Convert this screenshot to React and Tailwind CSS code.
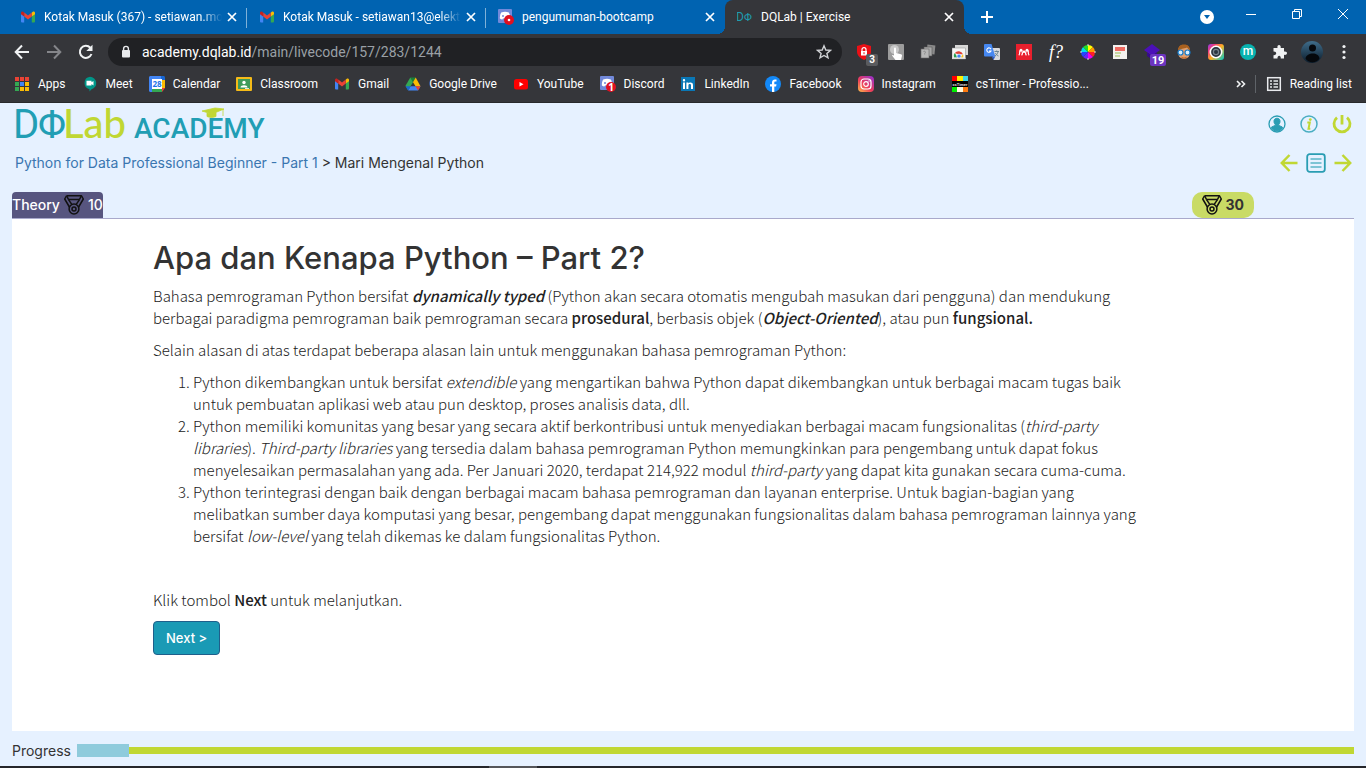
import React from "react";

const Svg = ({ size = 16, box = "0 0 16 16", className = "", children }) => (
  <svg width={size} height={size} viewBox={box} className={"shrink-0 " + className} fill="none" aria-hidden="true">
    {children}
  </svg>
);

/* ---------- brand icons ---------- */
const GmailIcon = () => (
  <Svg>
    <path d="M1 4.2V12.6a1 1 0 0 0 1 1h2.2V7.4z" fill="#4285f4" />
    <path d="M15 4.2V12.6a1 1 0 0 1-1 1h-2.2V7.4z" fill="#34a853" />
    <path d="M11.8 3.6v4L15 5.2V4c0-1.3-1.4-1.9-2.4-1.1z" fill="#fbbc04" />
    <path d="M4.2 7.6v-4L8 6.4l3.8-2.8v4L8 10.5z" fill="#ea4335" />
    <path d="M1 4v1.2l3.2 2.4v-4l-.8-.7C2.4 2.1 1 2.700 1 4z" fill="#c5221f" />
  </Svg>
);
const DiscordIcon = ({ count }) => (
  <Svg>
    <rect width="14" height="14" x="0" y="0" rx="1" fill="#7289da" />
    <path d="M3.200 3.600c2.600-1.200 5.200-1.200 7.600 0 1 1.800 1.500 3.700 1.300 5.800-.9.700-1.700 1-2.500 1.100l-.6-1H5l-.6 1c-.8-.1-1.600-.4-2.500-1.100-.2-2.100.3-4 1.300-5.800z" fill="#fff" />
    <circle cx="5" cy="7" r="1" fill="#7289da" />
    <circle cx="11" cy="11" r="5" fill="#e01020" />
    {count ? (
      <text x="11" y="14.500" fontSize="10" fontWeight="700" fontFamily="Open Sans, sans-serif" textAnchor="middle" fill="#fff">{count}</text>
    ) : (
      <circle cx="11" cy="11" r="1.300" fill="#fff" />
    )}
  </Svg>
);
const DqIcon = () => (
  <Svg>
    <text x="-1" y="12" fontSize="12" fontFamily="Roboto, sans-serif" fill="#1f9bb0">D</text>
    <text x="7" y="12" fontSize="11" fontFamily="Roboto, sans-serif" fill="#1f9bb0">Φ</text>
  </Svg>
);
const AppsIcon = () => (
  <Svg>
    {["#ea4335", "#ea4335", "#ea4335", "#34a853", "#4285f4", "#fbbc04", "#34a853", "#fbbc04", "#fbbc04"].map((c, i) => (
      <rect key={i} x={1 + (i % 3) * 5} y={1 + Math.floor(i / 3) * 5} width="4" height="4" fill={c} />
    ))}
  </Svg>
);
const MeetIcon = () => (
  <Svg>
    <path d="M8 .8a6.300 6.300 0 0 1 1.500 12.400L7.500 15.400v-2.200A6.300 6.300 0 0 1 8 .8z" fill="#009688" />
    <path d="M4.500 4.800h5v1.500l2-1.400v4.600l-2-1.400v1.400h-5z" fill="#fff" />
  </Svg>
);
const CalendarIcon = () => (
  <Svg>
    <path d="M0 1.500C0 .7.700 0 1.500 0H12v3H3v13H1.500C.7 16 0 15.300 0 14.500z" fill="#4285f4" />
    <path d="M12 0h2.500c.8 0 1.500.7 1.500 1.500V4h-4z" fill="#1967d2" />
    <path d="M13 4h3v8h-3z" fill="#fbbc04" />
    <path d="M3 13h10v3H3z" fill="#34a853" />
    <path d="M13 16v-4h3z" fill="#ea4335" />
    <path d="M3 3h10v10H3z" fill="#fff" />
    <text x="8" y="11" fontSize="8" fontWeight="700" fontFamily="Open Sans, sans-serif" textAnchor="middle" fill="#1a73e8">28</text>
  </Svg>
);
const ClassroomIcon = () => (
  <Svg>
    <rect y="1" width="16" height="14" rx="1" fill="#f6bb18" />
    <rect x="2" y="3" width="12" height="10" fill="#3e9b5b" />
    <circle cx="8" cy="6.500" r="1.700" fill="#fff" />
    <path d="M4.500 11.500c0-3 7-3 7 0z" fill="#fff" />
    <path d="M9 12h4v1H9z" fill="#dfe8df" />
  </Svg>
);
const DriveIcon = () => (
  <Svg>
    <path d="M5.300 1.500h5.400L8 6.200z" fill="#188038" />
    <path d="M5.300 1.500L0.500 9.800l2.600 4.400L8 6.200z" fill="#34a853" />
    <path d="M10.700 1.500L8 6.200l2.500 4H15.500z" fill="#fbbc04" />
    <path d="M5.600 10.200H15.500L13 14.500H3.100z" fill="#4285f4" />
    <path d="M10.500 10.200h5L13 14.500z" fill="#ea4335" />
    <path d="M.5 10.200h5L3.100 14.500z" fill="#1967d2" />
  </Svg>
);
const YoutubeIcon = () => (
  <Svg>
    <rect x="1" y="3" width="14" height="10.500" rx="2.500" fill="#f00" />
    <path d="M6.500 6v4.500l4-2.250z" fill="#fff" />
  </Svg>
);
const LinkedinIcon = () => (
  <Svg>
    <rect x="1" y="1" width="14" height="14" fill="#0a77b5" />
    <path d="M3 6.500h2V13H3zM4 3a1.200 1.200 0 1 1 0 2.400A1.200 1.200 0 0 1 4 3zM6.400 6.500h2v.9c.9-1.500 4.600-1.600 4.600 1.500V13h-2V9.500c0-2-2.600-1.800-2.600 0V13h-2z" fill="#fff" />
  </Svg>
);
const FacebookIcon = () => (
  <Svg>
    <circle cx="8" cy="8" r="8" fill="#1389f8" />
    <path d="M7 16v-5.500H5V8.200h2V6.500c0-2 1.200-3.100 3-3.100.8 0 1.500.1 1.500.1v2h-1c-1 0-1.200.6-1.200 1.200v1.500h2.200l-.4 2.300H9.300V16z" fill="#fff" />
  </Svg>
);
const InstagramIcon = () => (
  <Svg>
    <defs>
      <linearGradient id="insta" x1="0" y1="16" x2="14" y2="0" gradientUnits="userSpaceOnUse">
        <stop offset="0" stopColor="#fdc04b" /><stop offset=".45" stopColor="#ee3e58" /><stop offset="1" stopColor="#9b30c8" />
      </linearGradient>
    </defs>
    <rect width="16" height="16" rx="4" fill="url(#insta)" />
    <rect x="3" y="3" width="10" height="10" rx="3" stroke="#fff" strokeWidth="1.200" />
    <circle cx="8" cy="8" r="2.300" stroke="#fff" strokeWidth="1.200" />
    <circle cx="11" cy="5" r=".7" fill="#fff" />
  </Svg>
);
const CsTimerIcon = () => (
  <Svg>
    <path d="M0 0h5v6H0z" fill="#f00" /><path d="M5 0h6v6H5z" fill="#fe0" /><path d="M11 0h5v6h-5z" fill="#3bd5e8" />
    <path d="M0 5h16v6H0z" fill="#000" />
    <text x="8" y="9.500" fontSize="4" fontWeight="700" fontFamily="Roboto, sans-serif" textAnchor="middle" fill="#ddd">csTimer</text>
    <path d="M0 11h5v5H0z" fill="#0e0" /><path d="M5 11h6v5H5z" fill="#fffbe0" /><path d="M11 11h5v5h-5z" fill="#ff7a10" />
  </Svg>
);

/* ---------- toolbar icons ---------- */
const BackIcon = () => <Svg><path d="M15 8H2M8 1.500L1.700 8 8 14.500" stroke="currentColor" strokeWidth="2" /></Svg>;
const ForwardIcon = () => <Svg><path d="M1 8h13M8 1.500L14.300 8 8 14.500" stroke="currentColor" strokeWidth="2" /></Svg>;
const ReloadIcon = () => (
  <Svg>
    <path d="M13.500 10A6 6 0 1 1 12.300 3.800" stroke="currentColor" strokeWidth="2" />
    <path d="M14.500.800V7H8.300z" fill="currentColor" />
  </Svg>
);
const LockIcon = () => (
  <Svg>
    <rect x="4" y="6" width="8" height="7.500" rx="1" fill="#e8eaed" />
    <path d="M5.600 7V4.800a2.400 2.400 0 0 1 4.800 0V7" stroke="#e8eaed" strokeWidth="1.400" />
  </Svg>
);
const StarIcon = () => <Svg><path d="M8 1.800l1.800 4.200 4.600.4-3.500 3 1.100 4.500L8 11.500l-4 2.400 1.100-4.500-3.500-3L6.200 6z" stroke="#d0d2d5" strokeWidth="1.400" /></Svg>;
const CloseIcon = () => <Svg><path d="M4 4l8 8M12 4l-8 8" stroke="#fff" strokeWidth="1.700" /></Svg>;

const ShieldExt = () => (
  <span className="relative block">
    <Svg>
      <path d="M8 0l7 2v5.500c0 4-3 6.800-7 8.500-4-1.700-7-4.500-7-8.500V2z" fill="#ea1016" />
      <rect x="5" y="7" width="6" height="4.500" fill="#fff" />
      <path d="M6 7.500V5.600a2 2 0 0 1 4 0v1.900" stroke="#fff" strokeWidth="1.200" />
      <path d="M8 8.200v2" stroke="#ea1016" />
    </Svg>
    <span className="absolute left-2.5 top-2.5 flex h-3 w-3 items-center justify-center rounded-xs bg-[#5a5b5e] text-[10px] font-bold leading-none text-white">3</span>
  </span>
);
const TouchExt = () => (
  <Svg>
    <rect width="16" height="16" rx="1" fill="#9c9c9c" />
    <circle cx="6.500" cy="5.500" r="4.500" fill="#c9c9c9" />
    <path d="M6 4.500a1 1 0 0 1 2 0V9l5 1.300c.8.2 1 .8 1 1.500L13 16H7.500L4 11.500c1-1 1.500-.4 2 .3z" fill="#fff" />
  </Svg>
);
const CopyExt = () => (
  <Svg>
    <rect x="7" y="1" width="8" height="9" fill="#8a8a8a" transform="rotate(6 11 5)" />
    <rect x="4" y="3" width="8" height="9" fill="#a8a8a8" stroke="#555" strokeWidth=".6" />
    <rect x="1" y="5" width="8" height="9" fill="#b8b8b8" stroke="#666" strokeWidth=".6" />
    <path d="M3.500 7.500c2-1 2.500 1 1.200 2v1" stroke="#888" />
  </Svg>
);
const StoreExt = () => (
  <Svg>
    <rect x="3" y="1" width="13" height="10" fill="#d7d7d7" />
    <rect x="0" y="4" width="13.500" height="11" fill="#f5f5f5" stroke="#8a8a8a" strokeWidth=".5" />
    <path d="M2 13.500a4.700 4.700 0 0 1 .7-4.500l3 4.500z" fill="#2aa050" />
    <path d="M2.700 9.200a4.800 4.800 0 0 1 8.300 1H7z" fill="#e34133" />
    <path d="M11 10.200c.6 1.400.4 2.300.2 3.300H8z" fill="#fbc116" />
    <circle cx="7" cy="12.200" r="2.100" fill="#4285f4" stroke="#fff" strokeWidth=".7" />
    <rect y="13.700" width="13.500" height="1.300" fill="#ddd" />
  </Svg>
);
const TranslateExt = () => (
  <Svg>
    <path d="M7 4h8a1 1 0 0 1 1 1v10a1 1 0 0 1-1 1H9.500z" fill="#d8dadd" />
    <path d="M0 1a1 1 0 0 1 1-1h6.500l3.800 12.500H1a1 1 0 0 1-1-1z" fill="#4688f1" />
    <path d="M7.500 12.500h3.800L9.500 16z" fill="#2f5fc4" />
    <path d="M7 5.200A2.200 2.200 0 1 0 7 7H5" stroke="#fff" strokeWidth="1.100" />
    <path d="M10.500 7.500h4.500M12.700 6.500v1M14 8c-.5 2-1.500 3-3 4M11.500 9c.5 1.500 1.500 2.500 3 3" stroke="#607d8b" strokeWidth=".9" />
  </Svg>
);
const MendeleyExt = () => (
  <Svg>
    <rect width="16" height="16" fill="#e9202d" />
    <circle cx="5" cy="6.200" r="1.500" fill="#fff" />
    <circle cx="11" cy="6.200" r="1.500" fill="#fff" />
    <circle cx="8" cy="7.800" r="1.300" fill="#fff" />
    <path d="M2.800 11.200c1.100-.9 1-2.500 1-4.500M13.200 11.200c-1.100-.9-1-2.500-1-4.500M6.200 7.500c.4 1.300.2 2.800-.6 3.800M9.800 7.500c-.4 1.300-.2 2.800.6 3.800" stroke="#fff" strokeWidth="1.200" />
  </Svg>
);
const FontExt = () => <span className="font-['Liberation_Serif',serif] text-lg italic leading-none text-white">f?</span>;
const WheelExt = () => (
  <Svg>
    {["#ff0", "#f90", "#f22", "#e0e", "#62f", "#24f", "#0de", "#2d2"].map((c, i) => (
      <path key={c} d="M8 8L8 1A7 7 0 0 1 12.950 3.050z" fill={c} transform={"rotate(" + i * 45 + " 8 8)"} />
    ))}
    <path d="M8 0v2M8 14v2M0 8h2M14 8h2" stroke="#ddd" />
  </Svg>
);
const NoteExt = () => (
  <Svg>
    <rect x="1" y="1" width="14" height="14" fill="#f3f1ee" />
    <rect x="3" y="3" width="10" height="4" fill="#ee6a62" />
    <path d="M3 9h6M3 12h5" stroke="#9bbd55" strokeWidth="1.200" />
  </Svg>
);
const LayerExt = () => (
  <span className="relative block">
    <Svg><path d="M8 0l8 6-8 6-8-6z" fill="#4b10b8" /><path d="M3 8.500V12l5 3.500 5-3.500V8.500L8 12z" fill="#370b8c" /></Svg>
    <span className="absolute left-1.5 top-2.5 flex h-3 w-4 items-center justify-center rounded-xs bg-[#6b34c0] text-[11px] font-bold leading-none text-white">19</span>
  </span>
);
const FaceExt = () => (
  <Svg>
    <path d="M2.500 7C2 2 5 1 8 1s6 1 5.500 6v4c-1 5-10 5-11 0z" fill="#e0a070" />
    <path d="M2 7c0-4 1.500-6.500 6-6.500S14 3 14 7l-3-3.500C8 5 4.500 4 2 7z" fill="#a8601e" />
    <circle cx="4.500" cy="8.500" r="2.500" fill="#d8eefc" stroke="#1379c9" strokeWidth="1.200" />
    <circle cx="11.500" cy="8.500" r="2.500" fill="#d8eefc" stroke="#1379c9" strokeWidth="1.200" />
    <path d="M5.500 12.500c1.500 1.300 3.500 1.300 5 0v2h-5z" fill="#c46a2a" />
  </Svg>
);
const CameraExt = () => (
  <Svg>
    <defs>
      <linearGradient id="cam" x1="0" y1="0" x2="16" y2="14" gradientUnits="userSpaceOnUse">
        <stop offset="0" stopColor="#8a3df0" /><stop offset=".25" stopColor="#f03c7c" /><stop offset=".55" stopColor="#ffb020" /><stop offset="1" stopColor="#18c8b8" />
      </linearGradient>
    </defs>
    <rect width="16" height="16" rx="3" fill="url(#cam)" />
    <circle cx="8" cy="8" r="5.700" fill="#2b3540" stroke="#fff" strokeWidth="1.600" />
    <circle cx="8" cy="8" r="2.600" stroke="#77828c" strokeWidth="1.200" />
  </Svg>
);
const MExt = () => <span className="flex h-4 w-4 items-center justify-center rounded-full bg-[#08b3b0] pb-0.5 text-[12px] font-medium leading-none text-white">m</span>;
const PuzzleExt = () => (
  <Svg>
    <path d="M1.500 4h4c-1-4 4-4 3.200 0H12v3.600c4-1 4 4 0 3.200V14.500H8.700c.6-3.600-3.500-3.600-3.200 0h-4v-3.300c3.600.4 3.600-4 0-3.600z" fill="#f1f3f4" />
  </Svg>
);
const AvatarIcon = () => (
  <Svg size={22} box="0 0 22 22">
    <defs><linearGradient id="av" x1="0" y1="0" x2="0" y2="22" gradientUnits="userSpaceOnUse"><stop stopColor="#3f6d8b" /><stop offset="1" stopColor="#0c1c2b" /></linearGradient></defs>
    <circle cx="11" cy="11" r="11" fill="url(#av)" />
    <circle cx="11.500" cy="7" r="3.500" fill="#05080c" />
    <path d="M4.500 17.500c1-6 13-7 14 0-3 5-11 5-14 0z" fill="#05080c" />
  </Svg>
);
const DotsIcon = () => <Svg><circle cx="8" cy="2.500" r="1.600" fill="#f1f3f4" /><circle cx="8" cy="8" r="1.600" fill="#f1f3f4" /><circle cx="8" cy="13.500" r="1.600" fill="#f1f3f4" /></Svg>;

const MedalIcon = () => (
  <Svg size={20} box="0 0 20 20">
    <g stroke="#111" strokeWidth="1.500" strokeLinejoin="round">
      <path d="M2.500.8h15L19.300 4l-5 8.500M2.500.8L.7 4l5 8.500M4.500 4.600h11" />
      <path d="M4.500 4.600l3.300 4.800M15.500 4.600l-3.300 4.800M2.800 1l1.700 3.500M17.200 1l-1.700 3.500" />
      <circle cx="10" cy="14" r="4.900" />
      <circle cx="10" cy="14" r="2" />
    </g>
  </Svg>
);

/* ---------- browser chrome ---------- */
const tabs = [
  { title: "Kotak Masuk (367) - setiawan.mo", icon: <GmailIcon />, fade: true, sep: true },
  { title: "Kotak Masuk - setiawan13@elekt", icon: <GmailIcon />, fade: true, sep: true },
  { title: "pengumuman-bootcamp", icon: <DiscordIcon /> },
  { title: "DQLab | Exercise", icon: <DqIcon />, active: true },
];

const Tab = ({ title, icon, fade, sep, active }) => (
  <div role="tab" aria-selected={!!active} className={"relative flex w-[239px] items-center gap-2 pl-3 pr-[7px] " + (active ? "rounded-t-lg bg-[#35363a]" : "")}>
    {icon}
    <span className={"-mr-1.5 flex-1 overflow-hidden whitespace-nowrap " + (fade ? "[mask-image:linear-gradient(to_right,#000_88%,transparent)]" : "")}>{title}</span>
    <button aria-label={"Close " + title} className="shrink-0"><CloseIcon /></button>
    {sep && <span className="absolute right-0 top-2 h-5 w-px bg-[#7fb1d8]" />}
    {active && <span className="absolute -left-2 bottom-0 size-2 bg-[radial-gradient(circle_at_0_0,#0063b1_8px,#35363a_8px)]" />}
    {active && <span className="absolute -right-2 bottom-0 size-2 bg-[radial-gradient(circle_at_100%_0,#0063b1_8px,#35363a_8px)]" />}
  </div>
);

const extensions = [
  ["Ad blocker", ShieldExt], ["Touch", TouchExt], ["Copy", CopyExt], ["Web store", StoreExt], ["Translate", TranslateExt],
  ["Mendeley", MendeleyExt], ["WhatFont", FontExt], ["Colour wheel", WheelExt], ["Notes", NoteExt], ["Layers", LayerExt],
  ["Face", FaceExt], ["Camera", CameraExt], ["Mote", MExt], ["Extensions", PuzzleExt], ["Profile", AvatarIcon], ["Menu", DotsIcon],
];

const bookmarks = [
  ["Apps", AppsIcon], ["Meet", MeetIcon], ["Calendar", CalendarIcon], ["Classroom", ClassroomIcon], ["Gmail", GmailIcon],
  ["Google Drive", DriveIcon], ["YouTube", YoutubeIcon], ["Discord", () => <DiscordIcon count="1" />], ["LinkedIn", LinkedinIcon],
  ["Facebook", FacebookIcon], ["Instagram", InstagramIcon], ["csTimer - Professio...", CsTimerIcon],
];

const Browser = () => (
  <div className="bg-[#35363a] font-['Roboto',sans-serif] text-[12px] text-white">
    <div className="flex h-[34px] bg-[#0063b1] pl-2">
      <div role="tablist" className="flex">{tabs.map((t) => <Tab key={t.title} {...t} />)}</div>
      <button aria-label="New tab" className="ml-[15px] self-center">
        <Svg><path d="M8 2v12M2 8h12" stroke="#fff" strokeWidth="2" /></Svg>
      </button>
      <div className="ml-auto flex items-start">
        <button aria-label="Search tabs" className="mr-[13px] self-center">
          <Svg><circle cx="8" cy="8" r="7" fill="#fff" /><path d="M5 6h6l-3 4z" fill="#0063b1" /></Svg>
        </button>
        <button aria-label="Minimize" className="flex h-7 w-[46px] items-center justify-center"><Svg><path d="M3 8.500h10" stroke="#fff" /></Svg></button>
        <button aria-label="Restore" className="flex h-7 w-[46px] items-center justify-center"><Svg><path d="M3.500 5.500h7v7h-7zM5.500 5.500v-2h7v7h-2" stroke="#fff" /></Svg></button>
        <button aria-label="Close window" className="flex h-7 w-[46px] items-center justify-center"><Svg><path d="M3 3l10 10M13 3L3 13" stroke="#fff" /></Svg></button>
      </div>
    </div>
    <div className="flex h-9 items-center pr-1.5">
      <div className="flex gap-4 px-3.5 text-[#f1f3f4]">
        <button aria-label="Back"><BackIcon /></button>
        <button aria-label="Forward" className="text-[#85868a]"><ForwardIcon /></button>
        <button aria-label="Reload"><ReloadIcon /></button>
      </div>
      <div className="flex h-7 flex-1 items-center gap-2 rounded-full bg-[#202124] px-2.5 text-sm">
        <LockIcon />
        <span className="flex-1 text-[#9aa0a6]"><span className="text-white">academy.dqlab.id</span>/main/livecode/157/283/1244</span>
        <button aria-label="Bookmark this page"><StarIcon /></button>
      </div>
      <div className="ml-1.5 flex">
        {extensions.map(([name, Icon]) => (
          <button key={name} aria-label={name} className="flex w-8 items-center justify-center"><Icon /></button>
        ))}
      </div>
    </div>
    <div className="flex h-[33px] items-center border-b border-[#28292b] px-3.5 pb-1">
      <nav className="flex gap-4">
        {bookmarks.map(([name, Icon]) => (
          <a key={name} href="#" className="flex items-center gap-2 whitespace-nowrap"><Icon />{name}</a>
        ))}
      </nav>
      <div className="ml-auto flex items-center whitespace-nowrap">
        <button aria-label="More bookmarks" className="mr-1.5">
          <Svg><path d="M4 5l3 3-3 3M8.500 5l3 3-3 3" stroke="#f1f3f4" strokeWidth="1.600" /></Svg>
        </button>
        <button className="flex items-center gap-2 border-l border-[#5f6368] pl-2.5">
          <Svg><rect x="1.700" y="1.700" width="12.600" height="12.600" stroke="#e8eaed" strokeWidth="1.500" /><path d="M4 5h2M4 8h2M4 11h2M7.500 5H12M7.500 8H12M7.500 11H12" stroke="#e8eaed" strokeWidth="1.500" /></Svg>
          Reading list
        </button>
      </div>
    </div>
  </div>
);

/* ---------- page ---------- */
const Logo = () => (
  <svg width="256" height="34" viewBox="0 0 256 34" role="img" aria-label="DQLab Academy" fontFamily="Roboto, sans-serif">
    <g fill="#219eb4">
      <text x="-2" y="31" fontSize="40">D</text>
      <text x="23" y="31" fontSize="39">Φ</text>
    </g>
    <text x="48" y="31" fontSize="40" fontWeight="500" fontFamily="Lato, sans-serif" fill="#c0d733">Lab</text>
    <text x="119" y="31" fontSize="28" fontWeight="500" fill="#219eb4">ACADEMY</text>
    <path d="M187 4l13-3 9 1-12 5zM192 6v3.500c4 1.500 6 1 9 0V5.500l-4 1.500zM208 2v7" fill="#c0d733" stroke="#c0d733" strokeWidth=".8" />
  </svg>
);

const AccountIcons = () => (
  <div className="flex items-center gap-3.5">
    <button aria-label="Profile">
      <Svg size={18} box="0 0 18 18">
        <circle cx="9" cy="9" r="8" stroke="#2a9db3" strokeWidth="1.300" />
        <path d="M9 3.200c2.200 0 3.200 1.600 3 3.500-.1 1.400-.6 2.100-1.200 2.700v1l3.500 1.600c.6.300.7.800.3 1.300A7 7 0 0 1 9 16a7 7 0 0 1-5.600-2.700c-.4-.5-.3-1 .3-1.300l3.500-1.600v-1C6.600 8.800 6.100 8.100 6 6.700c-.2-1.900.8-3.500 3-3.500z" fill="#2a9db3" stroke="#2a9db3" />
      </Svg>
    </button>
    <button aria-label="Info">
      <Svg size={18} box="0 0 18 18">
        <circle cx="9" cy="9" r="8" stroke="#4aaec2" strokeWidth="1.500" />
        <circle cx="10.300" cy="4.600" r="1.400" fill="#c0d733" />
        <path d="M7.300 7.500h2.500L8.500 13.700h1.800" stroke="#c0d733" strokeWidth="2" />
      </Svg>
    </button>
    <button aria-label="Log out">
      <Svg size={20} box="0 0 20 20">
        <path d="M5 3.600a8 8 0 1 0 10 0M10 1v9.500" stroke="#c0d733" strokeWidth="2.800" />
      </Svg>
    </button>
  </div>
);

const PageNav = () => (
  <div className="flex items-center gap-2">
    <a href="#" aria-label="Previous page"><Svg size={18} box="0 0 18 18"><path d="M17.500 9H2M9.500 1L1.800 9l7.700 8" stroke="#c0d733" strokeWidth="2.500" /></Svg></a>
    <button aria-label="Contents">
      <Svg size={20} box="0 0 20 20">
        <rect x="1.200" y="1.200" width="17.600" height="17.600" rx="2.500" stroke="#2a9db3" strokeWidth="1.800" />
        <path d="M4.500 6h11M4.500 10h11M4.500 14h11" stroke="#5bb5c8" strokeWidth="1.500" />
      </Svg>
    </button>
    <a href="#" aria-label="Next page"><Svg size={18} box="0 0 18 18"><path d="M.5 9H16M8.500 1l7.700 8-7.700 8" stroke="#c0d733" strokeWidth="2.500" /></Svg></a>
  </div>
);

const Article = () => (
  <article className="max-w-[988px] text-[15px] font-light leading-[22px] text-[#222] [&_b]:font-medium">
    <h1 className="mb-[9px] font-['Inter',sans-serif] text-[31px] font-medium leading-9 text-[#333]">Apa dan Kenapa Python – Part 2?</h1>
    <p className="mb-2.5">
      Bahasa pemrograman Python bersifat <b><i>dynamically typed</i></b> (Python akan secara otomatis mengubah masukan dari pengguna) dan mendukung berbagai paradigma pemrograman baik pemrograman secara <b>prosedural</b>, berbasis objek (<b><i>Object-Oriented</i></b>), atau pun <b>fungsional.</b>
    </p>
    <p className="mb-2.5">Selain alasan di atas terdapat beberapa alasan lain untuk menggunakan bahasa pemrograman Python:</p>
    <ol className="mb-[42px] list-decimal pl-10">
      <li>Python dikembangkan untuk bersifat <i>extendible</i> yang mengartikan bahwa Python dapat dikembangkan untuk berbagai macam tugas baik untuk pembuatan aplikasi web atau pun desktop, proses analisis data, dll.</li>
      <li>Python memiliki komunitas yang besar yang secara aktif berkontribusi untuk menyediakan berbagai macam fungsionalitas (<i>third-party libraries</i>). <i>Third-party libraries</i> yang tersedia dalam bahasa pemrograman Python memungkinkan para pengembang untuk dapat fokus menyelesaikan permasalahan yang ada. Per Januari 2020, terdapat 214,922 modul <i>third-party</i> yang dapat kita gunakan secara cuma-cuma.</li>
      <li>Python terintegrasi dengan baik dengan berbagai macam bahasa pemrograman dan layanan enterprise. Untuk bagian-bagian yang melibatkan sumber daya komputasi yang besar, pengembang dapat menggunakan fungsionalitas dalam bahasa pemrograman lainnya yang bersifat <i>low-level</i> yang telah dikemas ke dalam fungsionalitas Python.</li>
    </ol>
    <p className="mb-2.5">Klik tombol <b>Next</b> untuk melanjutkan.</p>
    <button className="rounded-sm border border-[#1f5f8b] bg-[#1a9ab5] px-3 py-1.5 font-['Inter',sans-serif] text-[13px] font-medium leading-5 text-white">Next &gt;</button>
  </article>
);

export default function App() {
  return (
    <div className="flex min-h-screen flex-col bg-[#e6f1ff] font-['Noto_Sans_CJK_SC',sans-serif] text-[#333]">
      <Browser />
      <header className="flex items-center justify-between pl-[15px] pr-3.5 pt-1">
        <Logo />
        <AccountIcons />
      </header>
      <div className="flex items-center justify-between pl-[15px] pr-3.5 pt-3 font-['Inter',sans-serif] text-sm leading-5">
        <div><a href="#" className="text-[#3a76b0]">Python for Data Professional Beginner - Part 1</a> &gt; Mari Mengenal Python</div>
        <PageNav />
      </div>
      <main className="mx-3 mt-[19px] flex flex-1 flex-col font-['Inter',sans-serif] text-sm">
        <div className="flex items-end justify-between border-b border-[#a9a9cb] pr-[100px]">
          <div className="flex h-[26px] items-center gap-1 rounded-t-sm bg-[#57557f] font-medium text-white">Theory <MedalIcon /> 10</div>
          <div className="flex h-[26px] items-center gap-1 rounded-[10px] bg-[#c9db65] px-2.5 font-bold">
            <MedalIcon /> 30
          </div>
        </div>
        <div className="flex-1 bg-white pl-[141px] pr-[100px] pt-[21px] font-['Noto_Sans_CJK_SC',sans-serif]"><Article /></div>
      </main>
      <footer className="flex h-[35px] items-center gap-1.5 px-3 pt-1 font-['Inter',sans-serif] text-sm">
        <span id="progress-label">Progress</span>
        <div role="progressbar" aria-labelledby="progress-label" aria-valuenow={4} className="flex flex-1 items-center">
          <div className="h-[13px] w-[52px] bg-[#8fcbdc]" />
          <div className="h-[7px] flex-1 bg-[#c0d733]" />
        </div>
      </footer>
      <div className="h-0.5 bg-[#25262b] pl-[489px]"><div className="h-0.5 w-12 bg-[#55565a]" /></div>
    </div>
  );
}
